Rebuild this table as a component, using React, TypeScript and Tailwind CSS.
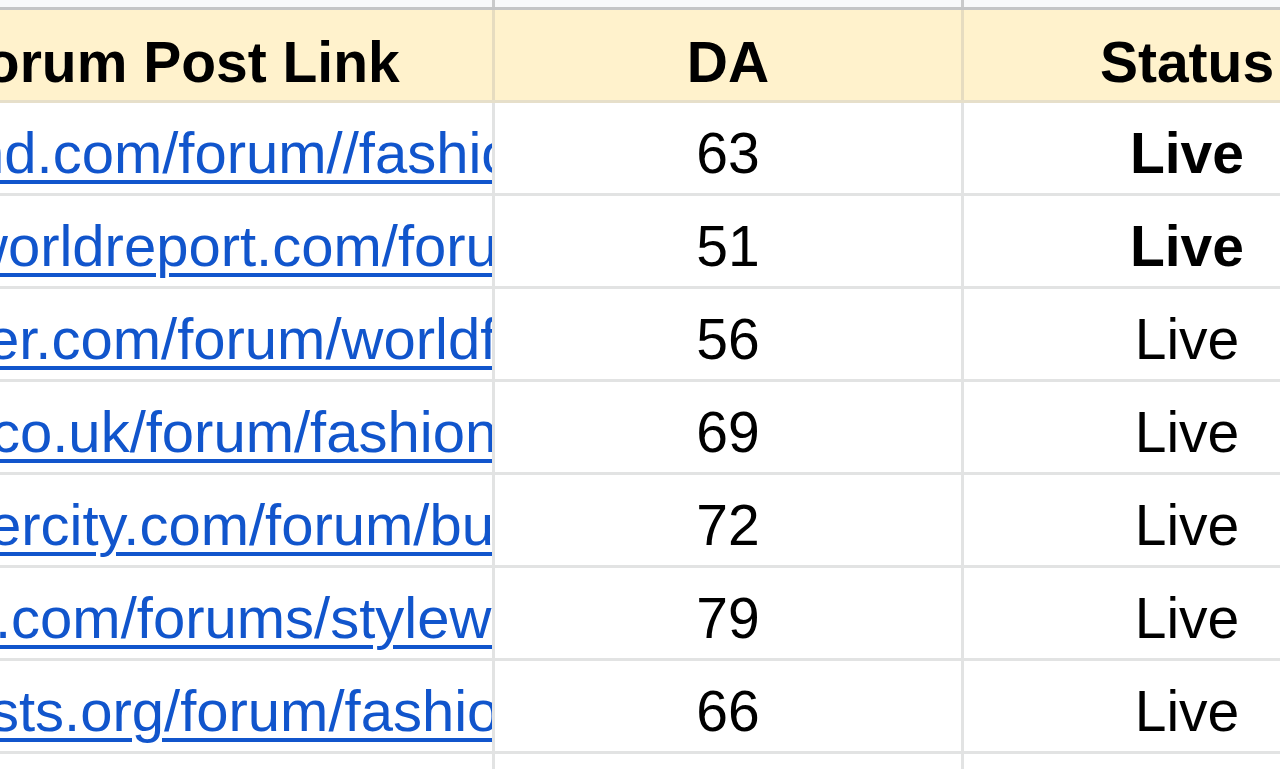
const rows = [
  { link: 'nd.com/forum//fashion-week', shift: '-ml-[28px]', da: 63, bold: true },
  { link: 'worldreport.com/forum/style', shift: '-ml-[34px]', da: 51, bold: true },
  { link: 'er.com/forum/worldfashion', shift: '-ml-[13px]', da: 56, bold: false },
  { link: 'co.uk/forum/fashion', shift: '-ml-[9px]', da: 69, bold: false },
  { link: 'ercity.com/forum/business', shift: '-ml-[11px]', da: 72, bold: false },
  { link: '.com/forums/stylewatch', shift: '-ml-[5px]', da: 79, bold: false },
  { link: 'sts.org/forum/fashion', shift: '-ml-[10px]', da: 66, bold: false },
]

export default function App() {
  return (
    <div className="w-[1280px] h-[769px] overflow-hidden bg-white font-['Liberation_Sans',Arial,sans-serif] text-[57px] leading-none text-black">
      {/* column header strip, mostly scrolled away */}
      <div className="flex h-[10px] bg-[#f8f9fa] border-b-[3px] border-[#c4c5c6]">
        <div className="w-[495px] shrink-0 border-r-[3px] border-[#c9cacb]" />
        <div className="w-[469px] shrink-0 border-r-[3px] border-[#c9cacb]" />
        <div className="w-[446px] shrink-0" />
      </div>

      <div className="flex h-[93px] bg-[#fff2cc] border-b-[3px] border-[#e6dfca] font-bold">
        <div className="w-[495px] shrink-0 overflow-hidden whitespace-nowrap border-r-[3px] border-[#e6dcc0] flex items-end pb-[9px]">
          <span className="-ml-[50px]">Forum Post Link</span>
        </div>
        <div className="w-[469px] shrink-0 border-r-[3px] border-[#e6dcc0] flex items-end justify-center pb-[9px]">
          <span>DA</span>
        </div>
        <div className="w-[446px] shrink-0 flex items-end justify-center pb-[9px]">
          <span>Status</span>
        </div>
      </div>

      {rows.map((r) => (
        <div key={r.da} className="flex h-[93px] border-b-[3px] border-[#e2e3e3]">
          <div className="w-[495px] shrink-0 overflow-hidden whitespace-nowrap border-r-[3px] border-[#e2e3e3] flex items-end pb-[11px]">
            <a
              href="#"
              className={`${r.shift} text-[58px] text-[#1155cc] underline decoration-[4px] underline-offset-[7px]`}
            >
              {r.link}
            </a>
          </div>
          <div className="w-[469px] shrink-0 border-r-[3px] border-[#e2e3e3] flex items-end justify-center pb-[11px]">
            <span>{r.da}</span>
          </div>
          <div className="w-[446px] shrink-0 flex items-end justify-center pb-[11px]">
            <span className={r.bold ? 'font-bold' : ''}>Live</span>
          </div>
        </div>
      ))}

      <div className="flex h-[40px]">
        <div className="w-[495px] shrink-0 border-r-[3px] border-[#e2e3e3]" />
        <div className="w-[469px] shrink-0 border-r-[3px] border-[#e2e3e3]" />
      </div>
    </div>
  )
}
